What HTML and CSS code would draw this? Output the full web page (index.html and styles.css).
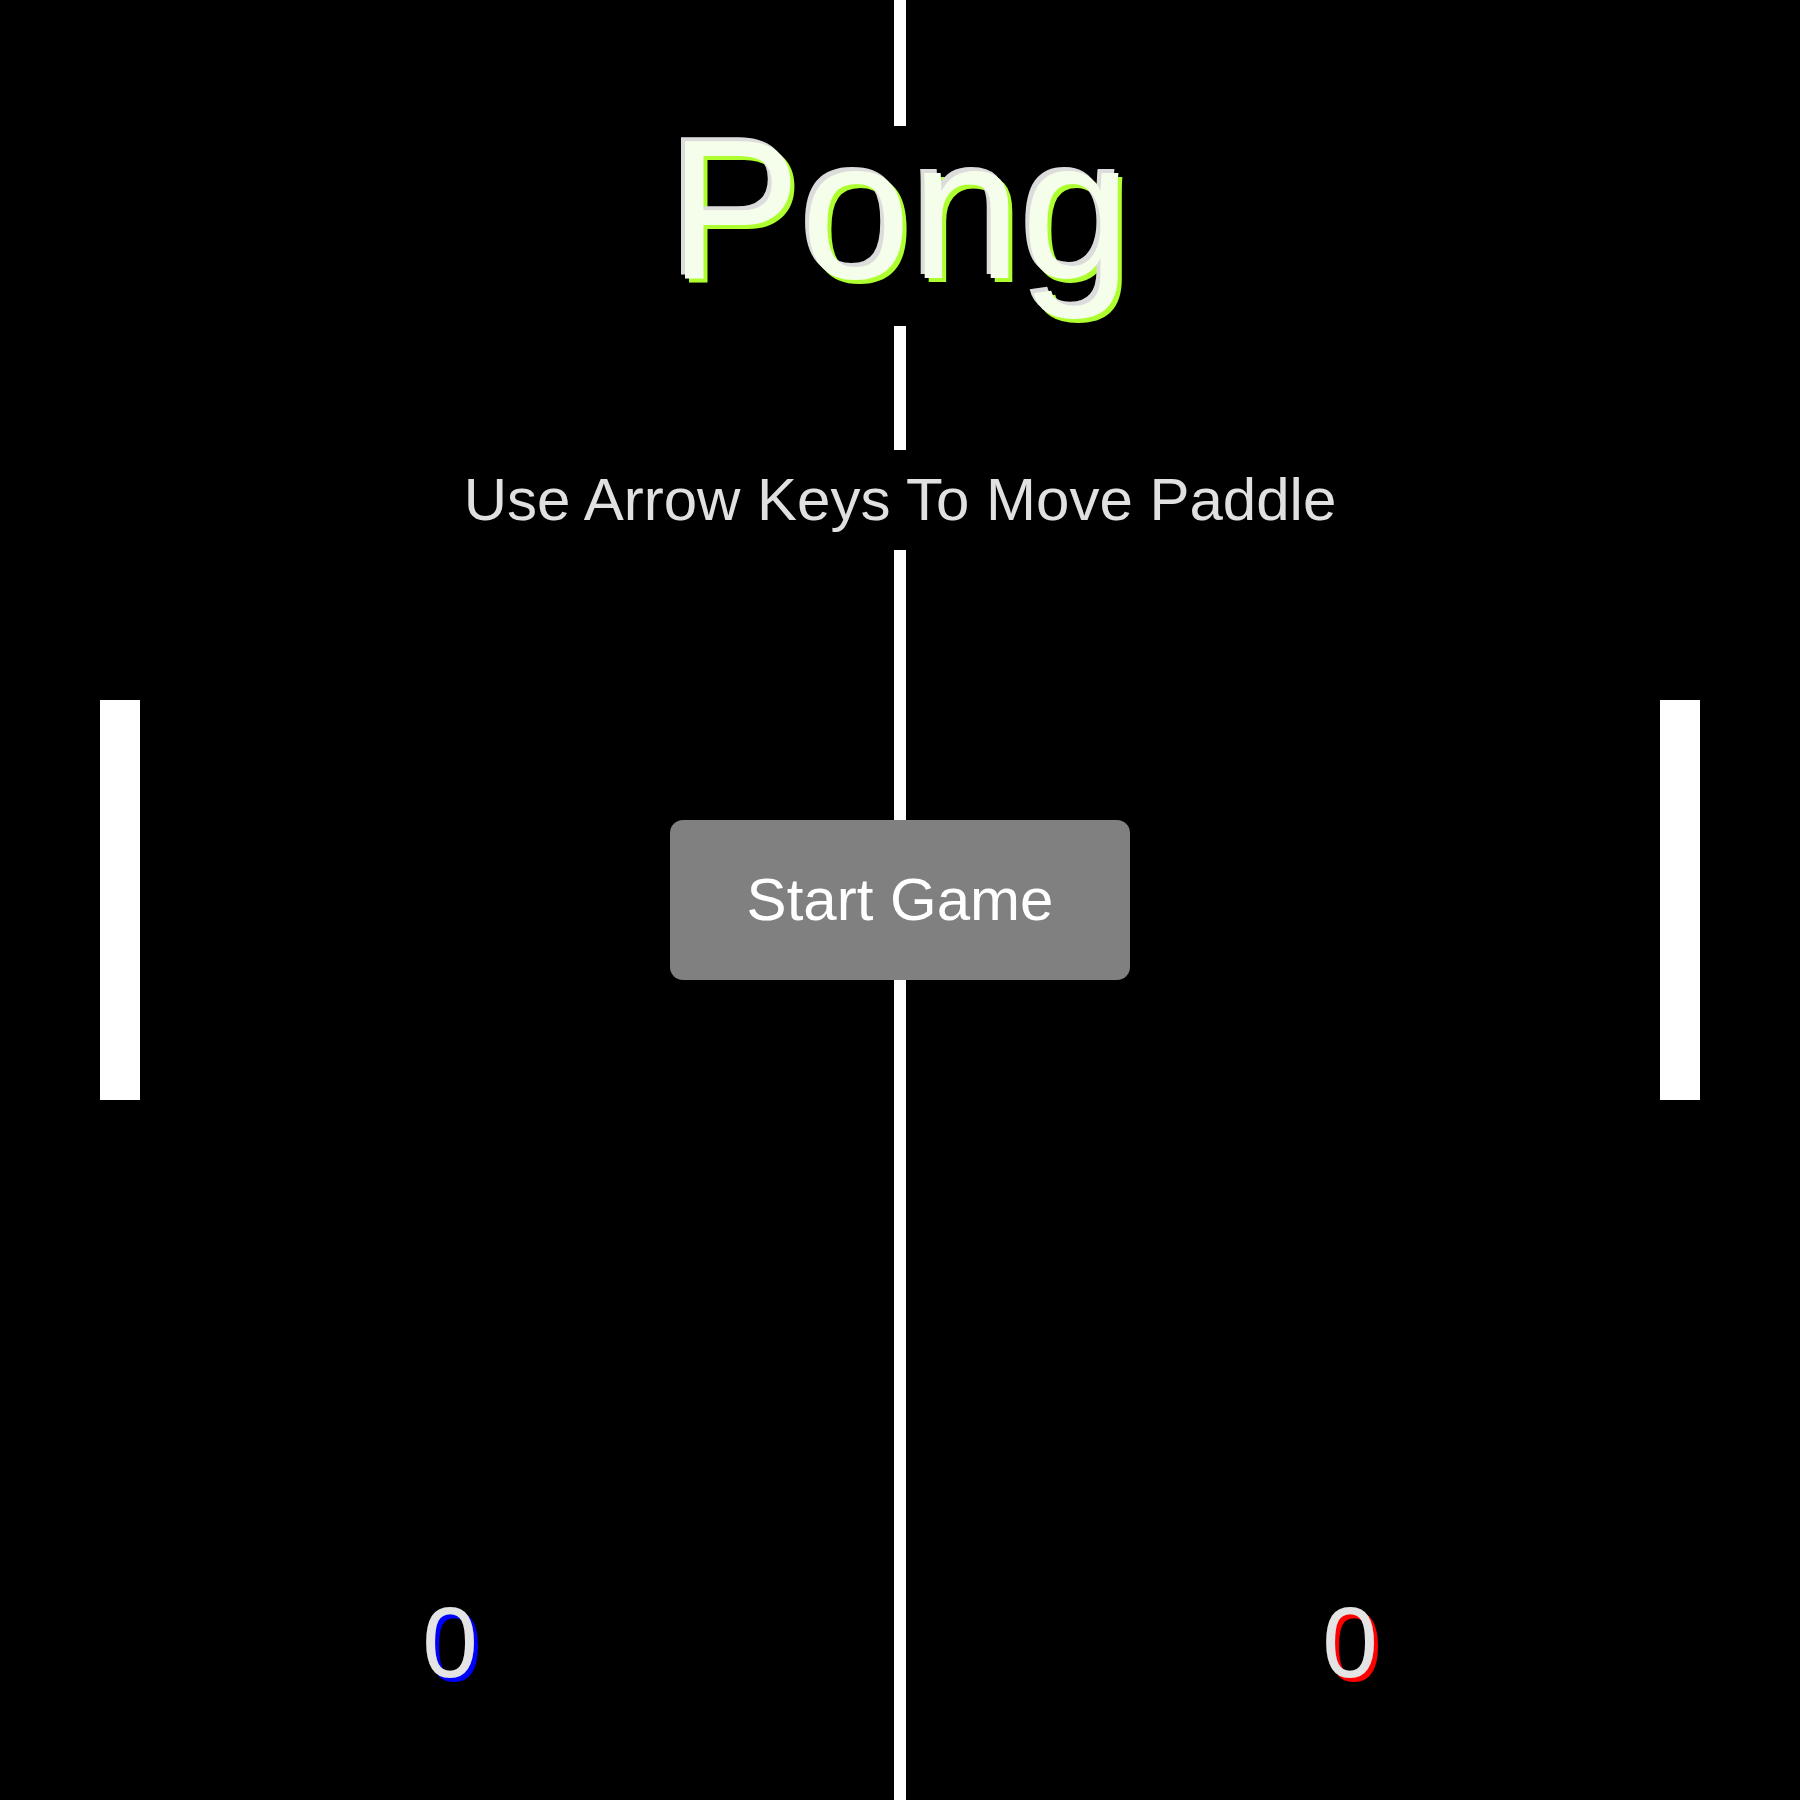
FILE: index.html
```html
<!DOCTYPE html>
<html>
<head>
<meta charset="utf-8">
<title>Pong</title>
<link rel="stylesheet" href="styles.css">
</head>
<body>
<div class="court">
  <div class="net"></div>
  <div class="paddle paddle-left"></div>
  <div class="paddle paddle-right"></div>
  <h1 class="title">Pong</h1>
  <p class="hint">Use Arrow Keys To Move Paddle</p>
  <button class="start">Start Game</button>
  <div class="scores">
    <div class="score score-left">0</div>
    <div class="score score-right">0</div>
  </div>
</div>
</body>
</html>
```

FILE: styles.css
```css
html, body {
  margin: 0;
  padding: 0;
  background: #000;
}

.court {
  position: relative;
  width: 1800px;
  height: 1800px;
  background: #000;
  overflow: hidden;
  display: flex;
  flex-direction: column;
  align-items: stretch;
  font-family: "Liberation Sans", Arial, sans-serif;
  padding-top: 126px;
  box-sizing: border-box;
}

.net {
  position: absolute;
  left: 894px;
  top: 0;
  width: 12px;
  height: 100%;
  background: #fff;
}

.paddle {
  position: absolute;
  top: 700px;
  width: 40px;
  height: 400px;
  background: #fff;
}

.paddle-left { left: 100px; }
.paddle-right { left: 1660px; }

.title {
  position: relative;
  margin: 0;
  font-size: 198px;
  font-weight: normal;
  line-height: 168px;
  padding-bottom: 32px;
  text-align: center;
  background: #000;
  color: #f5feea;
  text-shadow: -4px -4px 0 #dcdcdc, 4px 4px 0 #adff2f;
}

.hint {
  position: relative;
  margin: 124px 0 0;
  font-size: 60px;
  line-height: 100px;
  text-align: center;
  background: #000;
  color: #e0e0e0;
}

.start {
  position: relative;
  align-self: center;
  margin-top: 270px;
  width: 460px;
  height: 160px;
  padding: 0;
  border: none;
  border-radius: 13px;
  background: #808080;
  color: #fff;
  font-family: "Liberation Sans", Arial, sans-serif;
  font-size: 60px;
  line-height: 160px;
}

.scores {
  position: relative;
  margin-top: 612px;
  display: grid;
  grid-template-columns: 1fr 1fr;
}

.score {
  font-size: 100px;
  line-height: 100px;
  text-align: center;
  color: #e4e4e4;
}

.score-left { text-shadow: 4px 4px 0 #0000ff; }
.score-right { text-shadow: 4px 4px 0 #ff0000; }
```
